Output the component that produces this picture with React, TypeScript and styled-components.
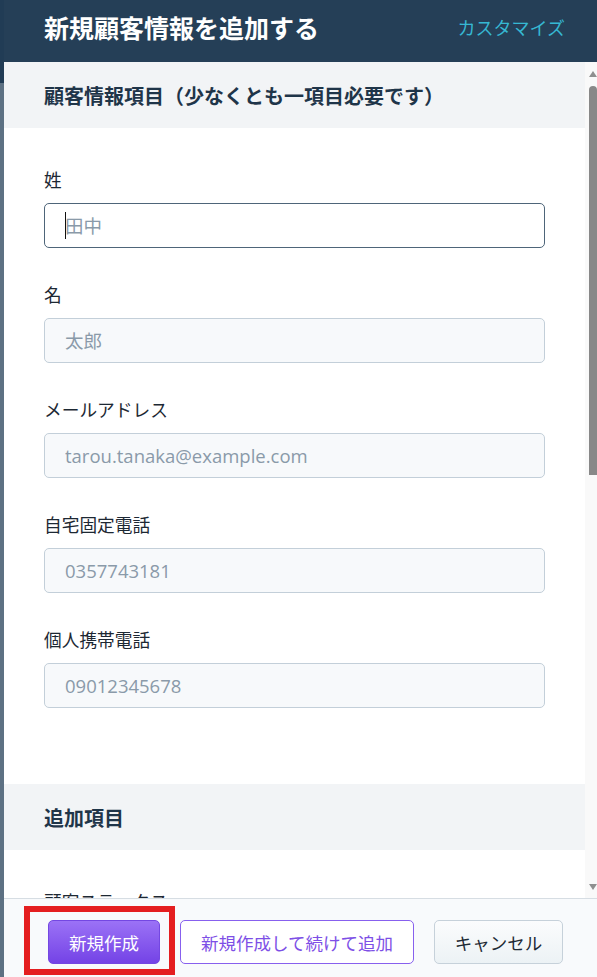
import React from 'react';
import styled, { createGlobalStyle } from 'styled-components';

const GlobalStyle = createGlobalStyle`
	html, body {
		margin: 0;
		padding: 0;
		height: 100%;
		overflow: hidden;
	}
	body {
		font-family: 'Noto Sans CJK JP', 'Open Sans', sans-serif;
		color: #222;
	}
	* {
		box-sizing: border-box;
	}
`;

interface Field {
	label: string;
	placeholder: string;
	focused?: boolean;
}

const fields: Field[] = [
	{ label: '姓', placeholder: '田中', focused: true },
	{ label: '名', placeholder: '太郎' },
	{ label: 'メールアドレス', placeholder: 'tarou.tanaka@example.com' },
	{ label: '自宅固定電話', placeholder: '0357743181' },
	{ label: '個人携帯電話', placeholder: '09012345678' },
];

const App = () => {
	return (
		<>
			<GlobalStyle />
			<Screen>
				<Backdrop />
				<Panel>
					<Header>
						<Title>新規顧客情報を追加する</Title>
						<CustomizeLink>カスタマイズ</CustomizeLink>
					</Header>
					<Body>
						<Content>
							<SectionBand>顧客情報項目（少なくとも一項目必要です）</SectionBand>
							<FormSection>
								{fields.map((f) => (
									<FieldBlock key={f.label}>
										<Label>{f.label}</Label>
										<InputWrap>
											<TextInput $focused={f.focused} placeholder={f.placeholder} readOnly />
											{f.focused && <Caret />}
										</InputWrap>
									</FieldBlock>
								))}
							</FormSection>
							<SectionBand>追加項目</SectionBand>
							<FormSection>
								<FieldBlock>
									<Label>顧客ステータス</Label>
								</FieldBlock>
							</FormSection>
						</Content>
						<Scrollbar>
							<ArrowUp />
							<Track>
								<Thumb />
							</Track>
							<ArrowDown />
						</Scrollbar>
					</Body>
					<Footer>
						<Highlighted>
							<PrimaryButton>新規作成</PrimaryButton>
							<RedMark />
						</Highlighted>
						<OutlineButton>新規作成して続けて追加</OutlineButton>
						<CancelButton>キャンセル</CancelButton>
					</Footer>
				</Panel>
			</Screen>
		</>
	);
};

const Screen = styled.div`
	display: flex;
	width: 100vw;
	height: 100vh;
	overflow: hidden;
`;

const Backdrop = styled.div`
	flex: 0 0 4px;
	background: linear-gradient(to bottom, #213c55 0, #213c55 83px, #5d7183 83px);
`;

const Panel = styled.div`
	flex: 1;
	display: flex;
	flex-direction: column;
	min-width: 0;
	background: #fff;
`;

const Header = styled.div`
	flex: 0 0 62px;
	display: flex;
	align-items: center;
	justify-content: space-between;
	padding: 0 32px 9px 40px;
	background: #253f57;
`;

const Title = styled.h1`
	margin: 0;
	font-size: 25px;
	font-weight: 700;
	color: #fff;
`;

const CustomizeLink = styled.a`
	font-size: 18px;
	color: #36b8d3;
	cursor: pointer;
`;

const Body = styled.div`
	flex: 1;
	display: flex;
	min-height: 0;
`;

const Content = styled.div`
	flex: 1;
	overflow: hidden;
`;

const SectionBand = styled.div`
	height: 66px;
	display: flex;
	align-items: center;
	padding: 0 40px;
	background: #f2f4f6;
	font-size: 20px;
	font-weight: 700;
	color: #1f3549;
`;

const FormSection = styled.div`
	padding: 38px 40px 76px;
`;

const FieldBlock = styled.div`
	margin-bottom: 33px;

	&:last-child {
		margin-bottom: 0;
	}
`;

const Label = styled.div`
	font-size: 17.7px;
	line-height: 27px;
	margin-bottom: 10px;
	color: #1d2833;
`;

const InputWrap = styled.div`
	position: relative;
`;

const TextInput = styled.input<{ $focused?: boolean }>`
	display: block;
	width: 100%;
	height: 45px;
	padding: 0 20px;
	border-radius: 5px;
	border: 1px solid ${(p) => (p.$focused ? '#4e6579' : '#c3cfd9')};
	background: ${(p) => (p.$focused ? '#fff' : '#f7f9fb')};
	font-family: 'Open Sans', 'Noto Sans CJK JP', sans-serif;
	font-size: 18.5px;
	outline: none;

	&::placeholder {
		color: #8a9aa9;
	}
`;

const Caret = styled.span`
	position: absolute;
	left: 21px;
	top: 9px;
	width: 1px;
	height: 27px;
	background: #111;
`;

const Scrollbar = styled.div`
	flex: 0 0 12px;
	display: flex;
	flex-direction: column;
	align-items: flex-end;
	background: #f9f9f9;
`;

const ArrowUp = styled.div`
	margin-top: 9px;
	width: 0;
	height: 0;
	border-left: 4.5px solid transparent;
	border-right: 4.5px solid transparent;
	border-bottom: 6px solid #8f8f8f;
`;

const ArrowDown = styled.div`
	margin-bottom: 8px;
	width: 0;
	height: 0;
	border-left: 4.5px solid transparent;
	border-right: 4.5px solid transparent;
	border-top: 6px solid #8f8f8f;
`;

const Track = styled.div`
	flex: 1;
	width: 8px;
	padding-top: 9px;
`;

const Thumb = styled.div`
	width: 8px;
	height: 389px;
	border-radius: 4px 4px 0 0;
	background: #888;
`;

const Footer = styled.div`
	flex: 0 0 79px;
	display: flex;
	align-items: flex-start;
	gap: 20px;
	padding: 21px 0 0 44px;
	border-top: 1px solid #d6dde3;
	background: #f8fafc;
`;

const Highlighted = styled.div`
	position: relative;
`;

const RedMark = styled.span`
	position: absolute;
	left: -24px;
	top: -14px;
	width: 151px;
	height: 69px;
	border: 6px solid #e41e20;
	pointer-events: none;
`;

const BaseButton = styled.button`
	height: 44px;
	border-radius: 5px;
	font-family: 'Noto Sans CJK JP', sans-serif;
	font-size: 17.5px;
	cursor: pointer;
	padding: 0;
`;

const PrimaryButton = styled(BaseButton)`
	width: 112px;
	color: #fff;
	border: 1px solid #7447e2;
	background: linear-gradient(to bottom, #9b72f6, #7443e6);
`;

const OutlineButton = styled(BaseButton)`
	width: 234px;
	color: #7d4fe6;
	border: 1px solid #8760ee;
	background: #fff;
`;

const CancelButton = styled(BaseButton)`
	width: 129px;
	color: #1e2a35;
	border: 1px solid #c6d1da;
	background: linear-gradient(to bottom, #fbfcfd, #ecf2f5);
`;

export default App;
